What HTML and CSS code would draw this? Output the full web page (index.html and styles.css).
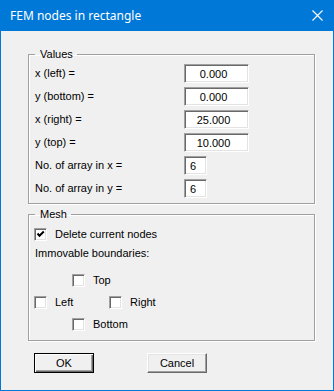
FILE: index.html
```html
<!DOCTYPE html>
<html>
<head>
    <meta charset="utf-8" />
    <title>FEM nodes in rectangle</title>
    <link rel="stylesheet" href="styles.css">
</head>
<body>
    <div class="dialog">
        <div class="titlebar">
            <span class="title">FEM nodes in rectangle</span>
            <svg class="close" width="11" height="11" viewBox="0 0 11 11">
                <path d="M0.5 0.5 L10.5 10.5 M10.5 0.5 L0.5 10.5" stroke="#fff" stroke-width="1.1" fill="none" />
            </svg>
        </div>
        <div class="client">
            <fieldset class="group values">
                <legend>Values</legend>
                <div class="rows">
                    <label>x (left) =</label><input class="num" type="text" value="0.000">
                    <label>y (bottom) =</label><input class="num" type="text" value="0.000">
                    <label>x (right) =</label><input class="num" type="text" value="25.000">
                    <label>y (top) =</label><input class="num" type="text" value="10.000">
                    <label>No. of array in x =</label><input class="count" type="text" value="6">
                    <label>No. of array in y =</label><input class="count" type="text" value="6">
                </div>
            </fieldset>
            <fieldset class="group mesh">
                <legend>Mesh</legend>
                <div class="check first">
                    <span class="box">
                        <svg width="9" height="9" viewBox="0 0 9 9"><path d="M1.5 3.5 L3.5 5.8 L7.8 1.5" stroke="#000" stroke-width="2" fill="none" /></svg>
                    </span>
                    <span>Delete current nodes</span>
                </div>
                <div class="caption">Immovable boundaries:</div>
                <div class="bounds">
                    <div class="check top"><span class="box"></span><span>Top</span></div>
                    <div class="check left"><span class="box"></span><span>Left</span></div>
                    <div class="check right"><span class="box"></span><span>Right</span></div>
                    <div class="check bottom"><span class="box"></span><span>Bottom</span></div>
                </div>
            </fieldset>
            <div class="buttons">
                <button class="btn default">OK</button>
                <button class="btn">Cancel</button>
            </div>
        </div>
    </div>
</body>
</html>
```

FILE: styles.css
```css
html, body {
    margin: 0;
    padding: 0;
    background: #f0f0f0;
}

.dialog {
    width: 334px;
    height: 391px;
    box-sizing: border-box;
    border: 1px solid #0078d7;
    border-top: 0;
    background: #f0f0f0;
    font-family: "Liberation Sans", Arial, sans-serif;
    font-size: 11px;
    color: #000;
}

.titlebar {
    height: 31px;
    margin: 0 -1px;
    background: #0078d7;
    display: flex;
    align-items: center;
    padding: 0 11px 0 10px;
}

    .titlebar .title {
        flex: 1;
        color: #fff;
        font-family: "Noto Sans", "Open Sans", sans-serif;
        font-size: 12px;
        margin-top: -1px;
    }

    .titlebar .close {
        display: block;
        margin-top: -1px;
    }

.client {
    padding: 0 18px 0 27px;
}

.group {
    margin: 0;
    border: 1px solid #a0a0a0;
    box-shadow: 1px 1px 0 #fff, inset 1px 1px 0 #fff;
    min-width: 0;
}

    .group legend {
        line-height: 15px;
        padding: 0 4px 0 5px;
    }

.values {
    margin-top: 16px;
    padding: 2px 6px 5px 6px;
}

.rows {
    display: grid;
    grid-template-columns: 149px auto;
    grid-auto-rows: 19px;
    row-gap: 4px;
    align-items: center;
    justify-items: start;
}

    .rows label {
        line-height: 19px;
    }

.rows input {
    height: 19px;
    box-sizing: border-box;
    margin: 0;
    font-family: "Liberation Sans", Arial, sans-serif;
    font-size: 11px;
    color: #000;
    background: #fff;
    border: 1px solid;
    border-color: #a0a0a0 #fff #fff #a0a0a0;
    box-shadow: inset 1px 1px 0 #696969, inset -1px -1px 0 #e3e3e3;
    outline: none;
}

    .rows input.num {
        width: 65px;
        text-align: center;
        padding: 0 6px 0 0;
    }

    .rows input.count {
        width: 23px;
        padding: 0 0 0 5px;
    }

.mesh {
    margin-top: 3px;
    padding: 2px 5px 6px 5px;
}

    .mesh legend {
        margin-left: 1px;
    }

.check {
    display: flex;
    align-items: center;
    height: 20px;
    white-space: nowrap;
}

    .check .box {
        width: 13px;
        height: 13px;
        box-sizing: border-box;
        flex: none;
        margin-right: 8px;
        background: #fff;
        border: 1px solid;
        border-color: #a0a0a0 #fff #fff #a0a0a0;
        box-shadow: inset 1px 1px 0 #696969, inset -1px -1px 0 #e3e3e3;
        display: flex;
        align-items: center;
        justify-content: center;
    }

        .check .box svg {
            display: block;
        }

.caption {
    height: 19px;
    line-height: 19px;
    padding-left: 1px;
}

.bounds {
    display: grid;
    grid-template-columns: 38px 37px auto;
    grid-auto-rows: 20px;
    row-gap: 2px;
    margin-top: 7px;
}

    .bounds .top {
        grid-column: 2 / 4;
        grid-row: 1;
    }

    .bounds .left {
        grid-column: 1 / 3;
        grid-row: 2;
    }

    .bounds .right {
        grid-column: 3;
        grid-row: 2;
    }

    .bounds .bottom {
        grid-column: 2 / 4;
        grid-row: 3;
    }

.buttons {
    display: flex;
    gap: 53px;
    margin: 12px 0 0 6px;
}

.btn {
    width: 60px;
    height: 20px;
    box-sizing: border-box;
    padding: 0;
    margin: 0;
    font-family: "Liberation Sans", Arial, sans-serif;
    font-size: 11px;
    color: #000;
    background: #f0f0f0;
    border: 1px solid;
    border-color: #fff #696969 #696969 #fff;
    box-shadow: inset -1px -1px 0 #a0a0a0, inset 1px 1px 0 #e3e3e3;
    border-radius: 0;
}

    .btn.default {
        border-color: #000;
        box-shadow: inset 1px 1px 0 #fff, inset -1px -1px 0 #696969, inset -2px -2px 0 #a0a0a0;
    }
```
